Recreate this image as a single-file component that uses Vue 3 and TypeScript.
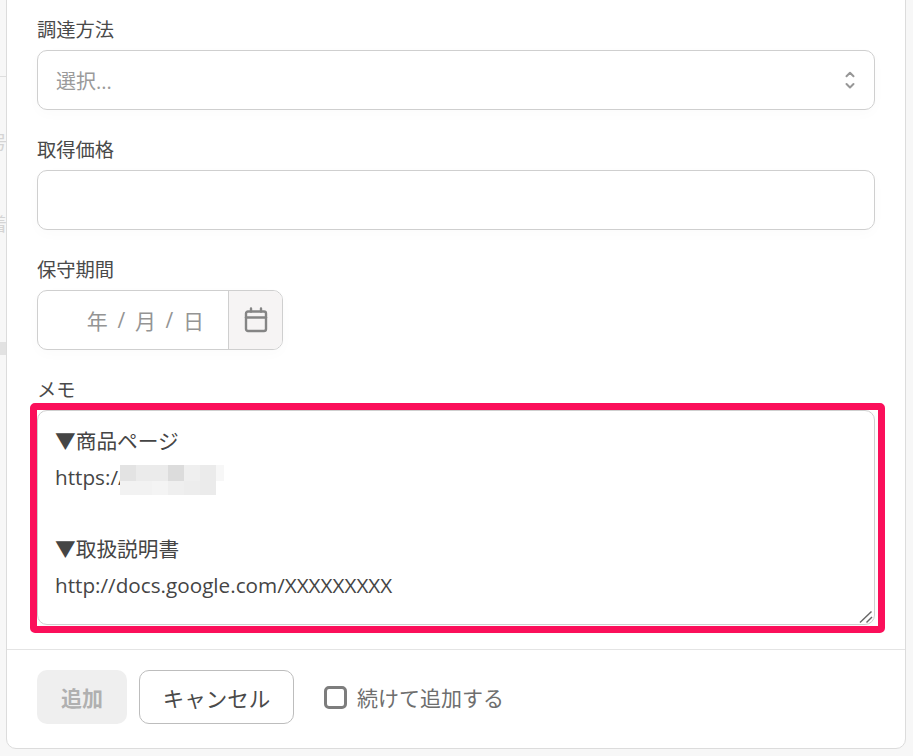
<script setup lang="ts">
const memo = "▼商品ページ\nhttps://\n\n▼取扱説明書\nhttp://docs.google.com/XXXXXXXXX";
const mosaic: string[] = [
  "#e3e3e3","#ebebeb","#ebebeb","#dcdcdc","#efefef","#ebebeb","#f7f7f7",
  "#f2f2f2","#f2f2f2","#f4f4f4","#efefef","#ededed","#ebebeb","#ffffff",
];
</script>

<template>
  <div class="page">
    <div class="backdrop">
      <span class="ghost ghost-a">号</span>
      <span class="ghost ghost-b">着</span>
      <span class="ghost-line"></span>
      <span class="ghost-bar"></span>
    </div>
    <div class="modal">
      <form class="body" @submit.prevent>
        <div class="field">
          <label class="label">調達方法</label>
          <div class="control select">
            <span class="placeholder">選択...</span>
            <svg class="updown" width="12" height="20" viewBox="0 0 12 20" fill="none" stroke="#979797" stroke-width="2" stroke-linecap="round" stroke-linejoin="round">
              <path d="M2.5 6.3 6 2.8 9.5 6.3" />
              <path d="M2.5 14 6 17.5 9.5 14" />
            </svg>
          </div>
        </div>
        <div class="field">
          <label class="label">取得価格</label>
          <input class="control text" type="text" />
        </div>
        <div class="field">
          <label class="label">保守期間</label>
          <div class="control date">
            <div class="date-text">
              <span>年</span><span class="sep">/</span><span>月</span><span class="sep">/</span><span>日</span>
            </div>
            <div class="date-btn">
              <svg width="24" height="26" viewBox="0 0 24 26" fill="none" stroke="#858585" stroke-width="2.4" stroke-linejoin="round" stroke-linecap="round">
                <rect x="2" y="4.5" width="20" height="19.5" rx="2" />
                <path d="M2 10.5H22" />
                <path d="M7 1.5V4.5M17 1.5V4.5" />
              </svg>
            </div>
          </div>
        </div>
        <div class="field">
          <label class="label">メモ</label>
          <div class="memo-wrap">
            <textarea class="control memo" :value="memo"></textarea>
            <div class="mosaic">
              <span v-for="(c, i) in mosaic" :key="i" :style="{ background: c }"></span>
            </div>
            <svg class="grip" width="14" height="12" viewBox="0 0 14 12" fill="none" stroke="#666" stroke-width="1.4">
              <path d="M1 11.5 12.5 0.5" />
              <path d="M7.5 11.5 13 6" />
            </svg>
            <div class="highlight"></div>
          </div>
        </div>
      </form>
      <div class="footer">
        <button class="btn primary" type="button" disabled>追加</button>
        <button class="btn cancel" type="button">キャンセル</button>
        <label class="check">
          <span class="box"></span>
          <span>続けて追加する</span>
        </label>
      </div>
    </div>
  </div>
</template>

<style>
html, body { margin: 0; background: #f7f7f7; }
</style>

<style scoped>
.page {
  position: relative;
  width: 913px;
  height: 756px;
  overflow: hidden;
  background: #f7f7f7;
  font-family: "Open Sans", "Noto Sans CJK JP", sans-serif;
  color: #4a4a4a;
}
.backdrop { position: absolute; inset: 0; }
.ghost { position: absolute; left: -11px; font-size: 18px; color: #d4d4d4; }
.ghost-a { top: 128px; }
.ghost-b { top: 210px; }
.ghost-line { position: absolute; left: 0; top: 76px; width: 6px; height: 1px; background: #dedede; }
.ghost-bar { position: absolute; left: 0; top: 342px; width: 6px; height: 13px; background: #e2e2e2; }
.modal {
  position: absolute;
  left: 6px;
  top: -60px;
  width: 900px;
  height: 809px;
  display: flex;
  flex-direction: column;
  box-sizing: border-box;
  background: #fff;
  border: 1px solid #dcdcdc;
  border-radius: 10px;
}
.body {
  flex: 1;
  display: flex;
  flex-direction: column;
  gap: 30px;
  padding: 79px 30px 0;
}
.field { display: flex; flex-direction: column; }
.label {
  height: 20px;
  line-height: 20px;
  margin-bottom: 10px;
  font-size: 19.3px;
  color: #4a4a4a;
}
.control {
  box-sizing: border-box;
  width: 100%;
  height: 60px;
  border: 1px solid #cfcfcf;
  border-radius: 10px;
  background: #fff;
  font: inherit;
  box-shadow: 0 4px 14px rgba(0, 0, 0, 0.02);
}
.select {
  display: flex;
  align-items: center;
  justify-content: space-between;
  padding: 0 18px;
}
.placeholder { font-size: 20px; color: #9a9a9a; }
.date { display: flex; width: 246px; overflow: hidden; }
.date-text {
  flex: 1;
  display: flex;
  align-items: center;
  justify-content: flex-end;
  gap: 9.7px;
  padding-right: 24px;
  font-size: 21px;
  color: #949494;
}
.date-btn {
  box-sizing: border-box;
  width: 54px;
  display: flex;
  align-items: center;
  justify-content: center;
  border-left: 1px solid #cfcfcf;
  background: #f6f4f4;
}
.memo-wrap { position: relative; }
.memo {
  display: block;
  height: 215px;
  padding: 12px 17px;
  font-size: 20.7px;
  line-height: 36px;
  color: #454545;
  outline: none;
  resize: none;
}
.highlight {
  position: absolute;
  inset: -7px -10px -8px -7px;
  border: 7px solid #fb0f5a;
  border-radius: 5px;
  pointer-events: none;
}
.mosaic {
  position: absolute;
  left: 83px;
  top: 55px;
  width: 104px;
  height: 30px;
  overflow: hidden;
  display: grid;
  grid-template-columns: repeat(7, 16px);
  grid-auto-rows: 16px;
}
.grip { position: absolute; right: 2px; bottom: 2px; }
.footer {
  display: flex;
  align-items: flex-start;
  height: 99px;
  flex: none;
  box-sizing: border-box;
  padding: 20px 30px 0;
  border-top: 1px solid #e4e4e4;
}
.btn {
  height: 54px;
  box-sizing: border-box;
  border-radius: 10px;
  font-family: inherit;
  font-size: 21px;
}
.primary {
  width: 90px;
  border: none;
  background: #efefef;
  color: #b0b0b0;
  font-weight: 700;
}
.cancel {
  width: 155px;
  margin-left: 12px;
  border: 1px solid #bdbdbd;
  background: #fff;
  color: #4a4a4a;
  font-size: 21.5px;
}
.check {
  display: flex;
  align-items: center;
  gap: 10px;
  height: 54px;
  margin-left: 30px;
  font-size: 21px;
  color: #6e6e6e;
}
.box {
  box-sizing: border-box;
  width: 23px;
  height: 23px;
  border: 3px solid #7d7d7d;
  border-radius: 5px;
}
</style>
